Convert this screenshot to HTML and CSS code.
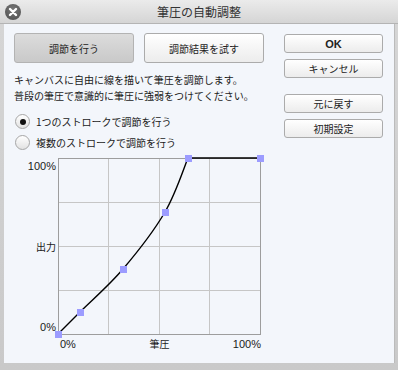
FILE: index.html
```html
<!DOCTYPE html>
<html lang="ja">
<head>
    <meta charset="UTF-8">
    <title>筆圧の自動調整</title>
    <link rel="stylesheet" href="styles.css">
</head>
<body>

    <div class="window">
        <div class="titlebar">
            <span class="close">
                <svg width="16" height="16" viewBox="0 0 16 16">
                    <path d="M5 5 L11 11 M11 5 L5 11" stroke="#fff" stroke-width="2.4" stroke-linecap="round"/>
                </svg>
            </span>
            <span class="title">筆圧の自動調整</span>
        </div>

        <div class="content">
            <div class="main">
                <div class="tabs">
                    <button class="btn tab pressed">調節を行う</button>
                    <button class="btn tab">調節結果を試す</button>
                </div>

                <p class="desc">キャンバスに自由に線を描いて筆圧を調節します。<br>普段の筆圧で意識的に筆圧に強弱をつけてください。</p>

                <label class="radio-row">
                    <span class="radio checked"></span>1つのストロークで調節を行う
                </label>
                <label class="radio-row">
                    <span class="radio"></span>複数のストロークで調節を行う
                </label>

                <!-- pressure curve -->
                <div class="chart">
                    <div class="y-labels">
                        <span>100%</span>
                        <span class="jp">出力</span>
                        <span>0%</span>
                    </div>
                    <svg class="plot" width="203" height="177" viewBox="0 0 203 177">
                        <g stroke="#c6c6c6" stroke-width="1">
                            <path d="M50.5 0 V177 M101.5 0 V177 M151.5 0 V177"/>
                            <path d="M0 44.5 H203 M0 88.5 H203 M0 132.5 H203"/>
                        </g>
                        <rect x="0.5" y="0.5" width="202" height="176" fill="none" stroke="#9d9d9d"/>
                        <path d="M0 176 C3.7 172.3 11.2 164.8 22 154 C32.8 143.2 50.8 127.7 65 111 C79.2 94.3 96.2 72.5 107 54 C117.8 35.5 126.2 9 130 0 L202 0"
                              fill="none" stroke="#000" stroke-width="1.4"/>
                        <g fill="#9c9cff">
                            <rect x="-3" y="173" width="7" height="7"/>
                            <rect x="19" y="151" width="7" height="7"/>
                            <rect x="62" y="108" width="7" height="7"/>
                            <rect x="104" y="51" width="7" height="7"/>
                            <rect x="127" y="-3" width="7" height="7"/>
                            <rect x="199" y="-3" width="7" height="7"/>
                        </g>
                    </svg>
                    <div class="x-labels">
                        <span class="x-min">0%</span>
                        <span class="jp">筆圧</span>
                        <span class="x-max">100%</span>
                    </div>
                </div>
            </div>

            <div class="side">
                <button class="btn small ok">OK</button>
                <button class="btn small">キャンセル</button>
                <button class="btn small gap">元に戻す</button>
                <button class="btn small">初期設定</button>
            </div>
        </div>
    </div>

</body>
</html>
```

FILE: styles.css
```css
body {
    margin: 0;
    background: #d2d2d2;
    font-family: "Noto Sans CJK JP", "Liberation Sans", sans-serif;
    color: #1a1a1a;
}
.window {
    width: 398px;
    height: 370px;
    display: flex;
    flex-direction: column;
    background: linear-gradient(#d6d6d6, #c9c9c9);
}
.titlebar {
    height: 23px;
    display: flex;
    align-items: center;
    justify-content: center;
    position: relative;
    background: linear-gradient(#ebebeb, #d5d5d5);
    border-bottom: 1px solid #b4b4b4;
}
.close {
    position: absolute;
    left: 5px;
    top: 4px;
    width: 16px;
    height: 16px;
    border-radius: 50%;
    background: radial-gradient(circle at 50% 35%, #777, #4e4e4e);
}
.close svg {
    display: block;
}
.title {
    font-size: 12px;
    color: #333;
}
.content {
    flex: 1;
    margin: 0 3px 7px 4px;
    background: #f3f6fb;
    display: flex;
    padding: 9px 0 0 10px;
    border-right: 1px solid #bbb;
}
.main {
    width: 250px;
}
.btn {
    font-family: "Noto Sans CJK JP", "Liberation Sans", sans-serif;
    font-size: 10px;
    color: #222;
    background: linear-gradient(#ffffff, #ececec);
    border: 1px solid #ababab;
    border-radius: 3px;
    padding: 0;
    cursor: pointer;
}
.tabs {
    display: flex;
    gap: 10px;
}
.tab {
    width: 120px;
    height: 30px;
}
.tab.pressed {
    background: linear-gradient(#dcdcdc, #c9c9c9);
    border-color: #b3b3b3;
}
.desc {
    margin: 9px 0 0;
    font-size: 10px;
    line-height: 16px;
}
.radio-row {
    display: flex;
    align-items: center;
    height: 21px;
    font-size: 10px;
}
.desc + .radio-row {
    margin-top: 7px;
}
.radio {
    width: 13px;
    height: 13px;
    border-radius: 50%;
    border: 1px solid #a6a6a6;
    background: linear-gradient(#ffffff, #e2e2e2);
    margin: 0 6px 0 1px;
    display: flex;
    align-items: center;
    justify-content: center;
    box-sizing: content-box;
}
.radio.checked::after {
    content: "";
    width: 6px;
    height: 6px;
    border-radius: 50%;
    background: #111;
}
.chart {
    margin-top: 5px;
    display: grid;
    grid-template-columns: 44px 203px;
    grid-template-rows: 177px 16px;
}
.y-labels {
    display: flex;
    flex-direction: column;
    justify-content: space-between;
    align-items: flex-end;
    padding: 1px 2px 1px 0;
    font-family: "Liberation Sans", sans-serif;
    font-size: 11px;
    line-height: 14px;
}
.jp {
    font-family: "Noto Sans CJK JP", sans-serif;
    font-size: 10px;
}
.plot {
    display: block;
    overflow: visible;
}
.x-labels {
    grid-column: 2;
    display: grid;
    grid-template-columns: 1fr auto 1fr;
    align-items: center;
    font-family: "Liberation Sans", sans-serif;
    font-size: 11px;
    line-height: 14px;
    padding-top: 2px;
}
.x-min {
    padding-left: 2px;
}
.x-max {
    justify-self: end;
}
.side {
    margin-left: 20px;
    display: flex;
    flex-direction: column;
    gap: 6px;
    padding-top: 1px;
}
.small {
    width: 99px;
    height: 19px;
}
.ok {
    font-family: "Liberation Sans", sans-serif;
    font-weight: bold;
    font-size: 11px;
}
.gap {
    margin-top: 10px;
}
```
